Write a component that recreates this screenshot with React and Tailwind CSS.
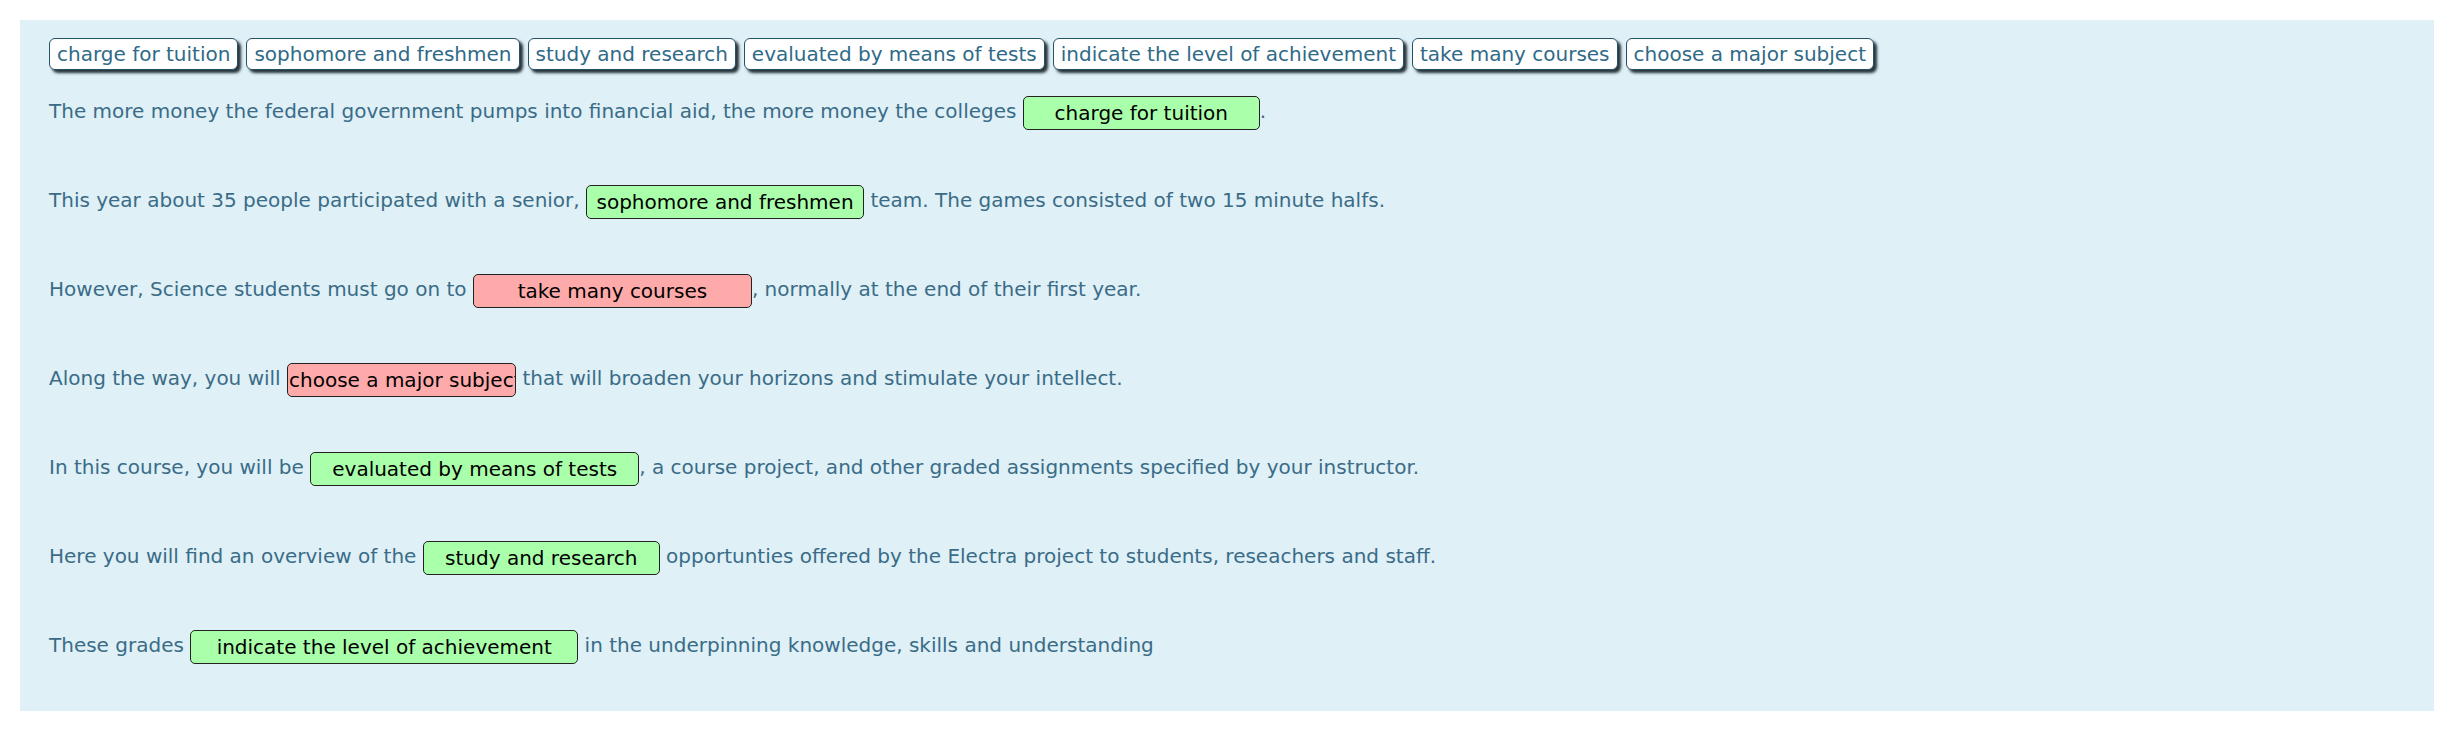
import React from 'react';

const choices = [
  'charge for tuition',
  'sophomore and freshmen',
  'study and research',
  'evaluated by means of tests',
  'indicate the level of achievement',
  'take many courses',
  'choose a major subject',
];

// each sentence: text before, dropped answer, text after, box width, correct?
const sentences = [
  { before: 'The more money the federal government pumps into financial aid, the more money the colleges ', answer: 'charge for tuition', after: '.', width: 'w-[237px]', ok: true },
  { before: 'This year about 35 people participated with a senior, ', answer: 'sophomore and freshmen', after: ' team. The games consisted of two 15 minute halfs.', width: 'w-[278px]', ok: true },
  { before: 'However, Science students must go on to ', answer: 'take many courses', after: ', normally at the end of their first year.', width: 'w-[279px]', ok: false },
  { before: 'Along the way, you will ', answer: 'choose a major subject', after: ' that will broaden your horizons and stimulate your intellect.', width: 'w-[229px]', ok: false },
  { before: 'In this course, you will be ', answer: 'evaluated by means of tests', after: ', a course project, and other graded assignments specified by your instructor.', width: 'w-[329px]', ok: true },
  { before: 'Here you will find an overview of the ', answer: 'study and research', after: ' opportunties offered by the Electra project to students, reseachers and staff.', width: 'w-[237px]', ok: true },
  { before: 'These grades ', answer: 'indicate the level of achievement', after: ' in the underpinning knowledge, skills and understanding', width: 'w-[388px]', ok: true },
];

const Chip = ({ label }) => (
  <span className="inline-block h-[32px] leading-[30px] px-[7px] mr-[8px] bg-white border border-[#245269] rounded-[6px] shadow-[3px_3px_3px_#263238] text-[#2f6a87]">
    {label}
  </span>
);

// the answer dropped into a blank; overflowing text is clipped like an input
const Blank = ({ value, width, ok }) => (
  <span
    className={`inline-block align-middle ${width} h-[34px] leading-[32px] px-px overflow-hidden whitespace-nowrap text-center text-black border border-[#222] rounded-[5px] ${ok ? 'bg-[#aaffaa]' : 'bg-[#ffaaaa]'}`}
  >
    {value}
  </span>
);

export default function App() {
  return (
    <div className="min-h-screen bg-white pt-[20px] pl-[20px] pr-[16px] font-['DejaVu_Sans',sans-serif] text-[20px]">
      <div className="bg-[#dff0f7] pt-[18px] pl-[29px] pr-[20px] pb-[49px]">
        {/* word bank */}
        <div className="flex mb-[24px]">
          {choices.map((c) => (
            <Chip key={c} label={c} />
          ))}
        </div>

        {/* sentences with dropped answers */}
        <div className="flex flex-col gap-[55px]">
          {sentences.map((s, i) => (
            <p key={i} className="h-[34px] leading-[34px] whitespace-pre text-[#3a6c87]">
              {s.before}
              <Blank value={s.answer} width={s.width} ok={s.ok} />
              {s.after}
            </p>
          ))}
        </div>
      </div>
    </div>
  );
}
